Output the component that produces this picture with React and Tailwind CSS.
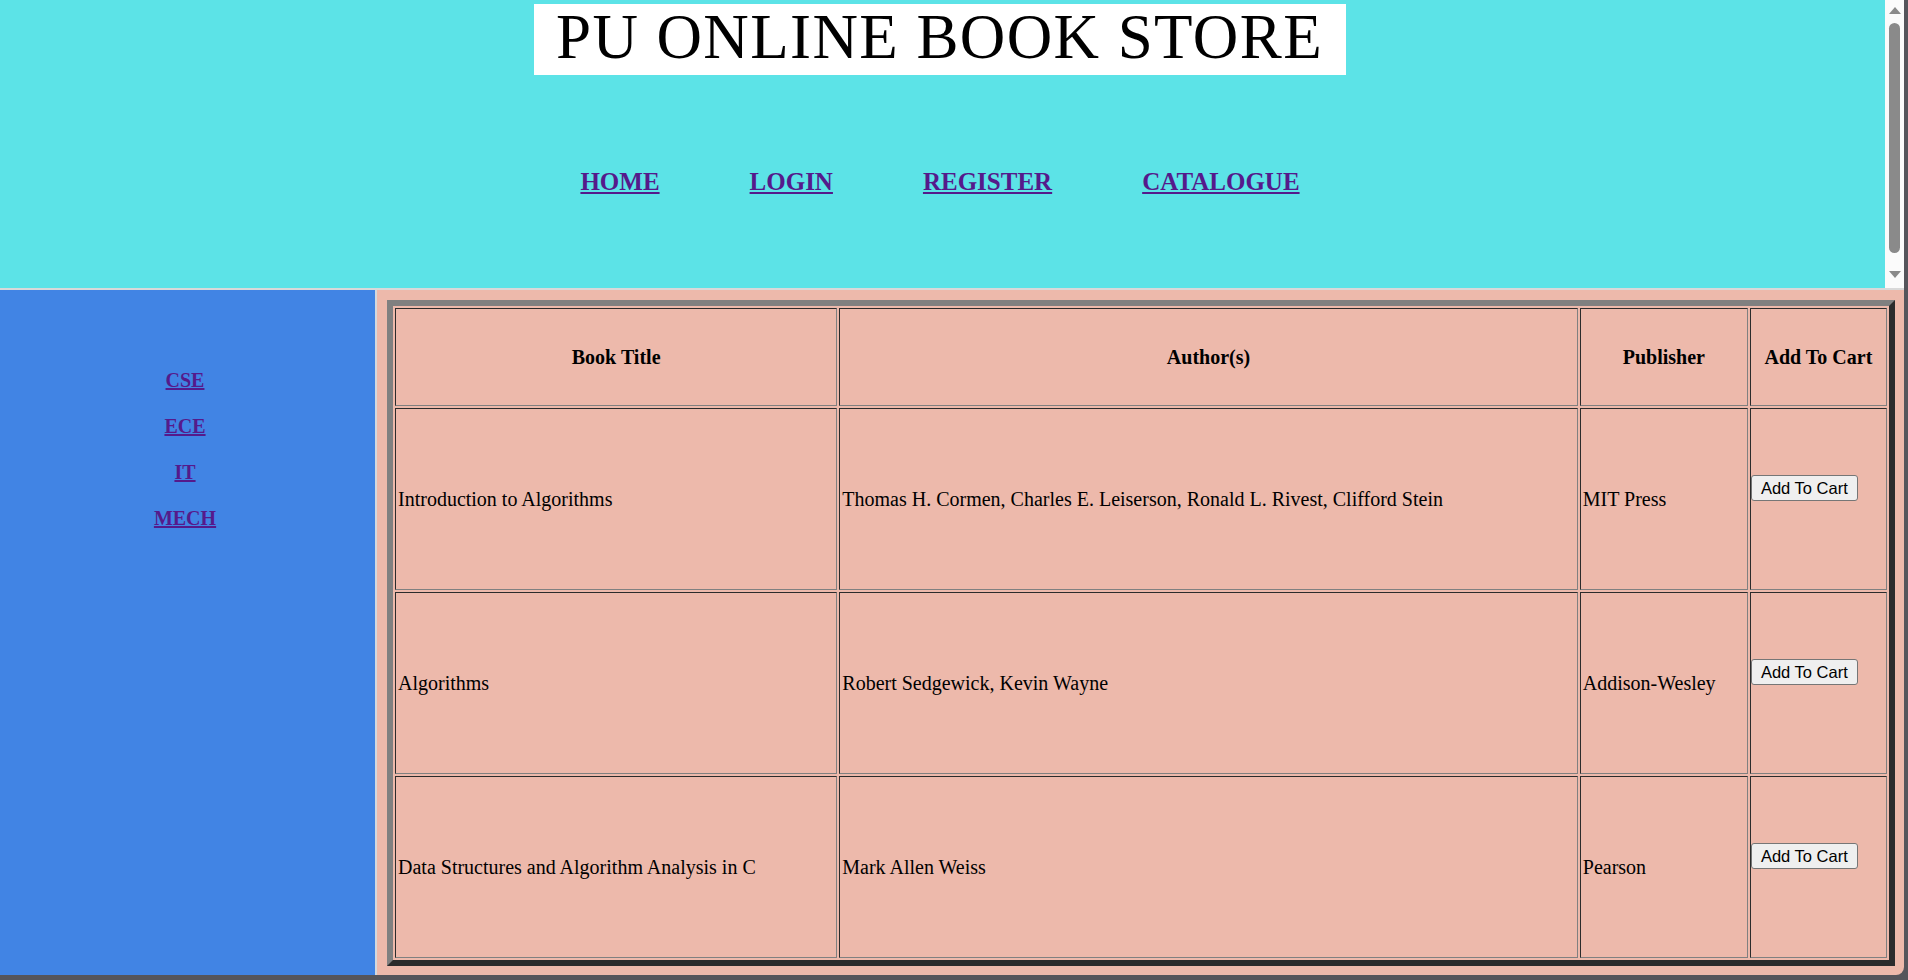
import React from 'react';

const books = [
    { title: 'Introduction to Algorithms', authors: 'Thomas H. Cormen, Charles E. Leiserson, Ronald L. Rivest, Clifford Stein', publisher: 'MIT Press' },
    { title: 'Algorithms', authors: 'Robert Sedgewick, Kevin Wayne', publisher: 'Addison-Wesley' },
    { title: 'Data Structures and Algorithm Analysis in C', authors: 'Mark Allen Weiss', publisher: 'Pearson' },
];

const navLinks = ['HOME', 'LOGIN', 'REGISTER', 'CATALOGUE'];
const branches = ['CSE', 'ECE', 'IT', 'MECH'];

function Scrollbar() {
    return (
        <div className="w-[19px] h-full bg-[#fbfbfb] flex flex-col items-center">
            <svg width="12" height="7" viewBox="0 0 12 7" className="mt-[7px]">
                <polygon points="6,0 12,7 0,7" fill="#8a8a8a" />
            </svg>
            <div className="w-[11px] h-[230px] mt-[9px] rounded-full bg-[#8a8a8a]" />
            <div className="flex-1" />
            <svg width="12" height="7" viewBox="0 0 12 7" className="mb-[10px]">
                <polygon points="0,0 12,0 6,7" fill="#8a8a8a" />
            </svg>
        </div>
    );
}

export default function App() {
    return (
        <div className="w-full h-[980px] bg-[#55555b] pr-[4px] pb-[5px] flex font-['Liberation_Serif',serif] text-black">
            <div className="flex-1 flex flex-col rounded-br-[8px] overflow-hidden">
                {/* Top frame */}
                <div className="h-[288px] flex bg-[#5ce3e7]">
                    <div className="flex-1 flex flex-col items-center pr-[5px]">
                        <div className="mt-[4px] h-[71px] bg-white pl-[22px] pr-[23px] pb-[4px]">
                            <h1 className="text-[63px] leading-[67px] tracking-[1.4px] font-normal whitespace-nowrap">
                                PU ONLINE BOOK STORE
                            </h1>
                        </div>
                        <nav className="mt-[92px] flex gap-[90px]">
                            {navLinks.map((l) => (
                                <a key={l} href="#" className="text-[25px] leading-[29px] font-bold text-[#551a8b] underline">
                                    {l}
                                </a>
                            ))}
                        </nav>
                    </div>
                    <Scrollbar />
                </div>

                <div className="h-[2px] bg-[#d9d9d9]" />

                {/* Bottom frames */}
                <div className="flex-1 flex min-h-0">
                    <div className="w-[375px] bg-[#4184e4] flex flex-col items-center pt-[67px] pr-[5px]">
                        {branches.map((b) => (
                            <a key={b} href="#" className="text-[20px] leading-[46px] font-bold text-[#551a8b] underline">
                                {b}
                            </a>
                        ))}
                    </div>
                    <div className="w-[2px] bg-[#d3d8de]" />
                    <div className="flex-1 bg-[#edb9ab] pt-[10px] pl-[10px] pr-[9px] pb-[9px]">
                        <table className="w-full h-full table-fixed border-separate border-spacing-[2px] border-[6px] border-t-[#808080] border-l-[#808080] border-r-[#2b2b2b] border-b-[#2b2b2b] text-[20px]">
                            <thead>
                                <tr className="h-[98px]">
                                    <th className="w-[442px] border border-t-[#2b2b2b] border-l-[#2b2b2b] border-r-[#808080] border-b-[#808080] px-[2px] text-center align-middle font-bold">Book Title</th>
                                    <th className="w-[738px] border border-t-[#2b2b2b] border-l-[#2b2b2b] border-r-[#808080] border-b-[#808080] px-[2px] text-center align-middle font-bold">Author(s)</th>
                                    <th className="w-[168px] border border-t-[#2b2b2b] border-l-[#2b2b2b] border-r-[#808080] border-b-[#808080] px-[2px] text-center align-middle font-bold">Publisher</th>
                                    <th className="w-[137px] border border-t-[#2b2b2b] border-l-[#2b2b2b] border-r-[#808080] border-b-[#808080] px-[2px] text-center align-middle font-bold whitespace-nowrap">Add To Cart</th>
                                </tr>
                            </thead>
                            <tbody>
                                {books.map((b) => (
                                    <tr key={b.title} className="h-[182px]">
                                        <td className="border border-t-[#2b2b2b] border-l-[#2b2b2b] border-r-[#808080] border-b-[#808080] px-[2px] align-middle">{b.title}</td>
                                        <td className="border border-t-[#2b2b2b] border-l-[#2b2b2b] border-r-[#808080] border-b-[#808080] px-[2px] align-middle">{b.authors}</td>
                                        <td className="border border-t-[#2b2b2b] border-l-[#2b2b2b] border-r-[#808080] border-b-[#808080] px-[2px] align-middle">{b.publisher}</td>
                                        <td className="border border-t-[#2b2b2b] border-l-[#2b2b2b] border-r-[#808080] border-b-[#808080] pl-0 pr-[1px] align-middle">
                                            <form className="mb-[22px]" onSubmit={(e) => e.preventDefault()}>
                                                <button className="block font-['Liberation_Sans',Arial,sans-serif] text-[16.5px] leading-[20px] px-[9px] py-[2px] bg-[#efefef] border border-[#767676] rounded-[3px] text-black whitespace-nowrap">
                                                    Add To Cart
                                                </button>
                                            </form>
                                        </td>
                                    </tr>
                                ))}
                            </tbody>
                        </table>
                    </div>
                </div>
            </div>
        </div>
    );
}
